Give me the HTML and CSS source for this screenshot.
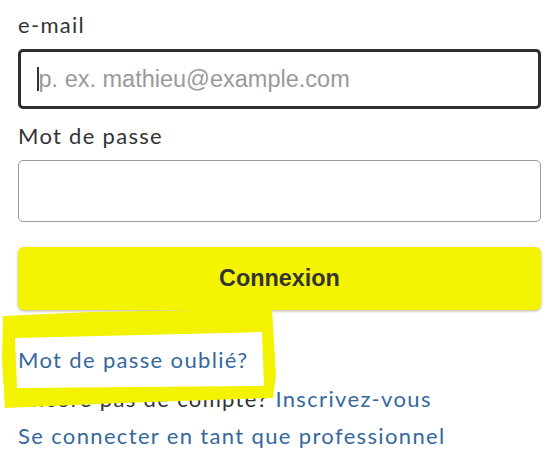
FILE: index.html
```html
<!DOCTYPE html>
<html lang="fr">
<head>
<meta charset="utf-8">
<title>Connexion</title>
<link rel="stylesheet" href="styles.css">
</head>
<body>
<form class="login">
  <label class="field-label" for="email">e-mail</label>
  <div class="input input-focus"><span class="caret"></span><span class="placeholder">p. ex. mathieu@example.com</span></div>
  <label class="field-label label-pw" for="pw">Mot de passe</label>
  <div class="input input-pw"></div>
  <div class="btn">Connexion</div>
  <div class="links">
    <a class="link forgot">Mot de passe oublié?</a>
    <p class="signup">Encore pas de compte? <a class="link">Inscrivez-vous</a></p>
    <a class="link pro">Se connecter en tant que professionnel</a>
  </div>
  <svg class="highlight" width="290" height="115" viewBox="0 0 290 115">
    <path fill-rule="evenodd" fill="#f3f300" d="M3 16 L90 12 L262 9 L272 9 L276 75 L273 98 L120 103 L5 108 L2 60 Z M15 38 L262 32 L264 86 L17 88 Z"/>
  </svg>
</form>
</body>
</html>
```
FILE: styles.css
```css
html, body {
  margin: 0;
  padding: 0;
  background: #ffffff;
}
.login {
  position: relative;
  display: flex;
  flex-direction: column;
  padding: 11px 9px 0 18px;
  font-family: Lato, "Liberation Sans", sans-serif;
  color: #333333;
}
.field-label {
  font-size: 22px;
  letter-spacing: 1.3px;
  line-height: 28px;
  color: #333333;
}
.label-pw {
  margin-top: 13px;
}
.input {
  box-sizing: border-box;
  height: 60px;
  margin-top: 10px;
  border: 1.5px solid #9a9a9a;
  border-radius: 5px;
  display: flex;
  align-items: center;
  padding-left: 18px;
}
.input-pw {
  height: 62px;
}
.input-focus {
  border: 3px solid #2e2e2e;
  padding-left: 16px;
}
.caret {
  width: 1.5px;
  height: 24px;
  background: #333;
}
.placeholder {
  font-family: "Liberation Sans", Arial, sans-serif;
  font-size: 23.5px;
  color: #9a9a9a;
}
.btn {
  box-sizing: border-box;
  height: 63px;
  margin-top: 25px;
  background: #f4f400;
  border-radius: 6px;
  box-shadow: 0 1px 3px rgba(90, 80, 0, 0.45);
  display: flex;
  align-items: center;
  justify-content: center;
  font-family: "Liberation Sans", Arial, sans-serif;
  font-weight: bold;
  font-size: 23.4px;
  color: #333333;
}
.links {
  display: flex;
  flex-direction: column;
  margin-top: 31px;
  font-size: 22px;
  letter-spacing: 1.35px;
  line-height: 37px;
}
.link {
  color: #36689c;
  text-decoration: none;
}
.forgot {
  margin-bottom: 2px;
}
.signup {
  margin: 0;
  color: #333333;
}
.highlight {
  position: absolute;
  left: 0;
  top: 300px;
}
```
